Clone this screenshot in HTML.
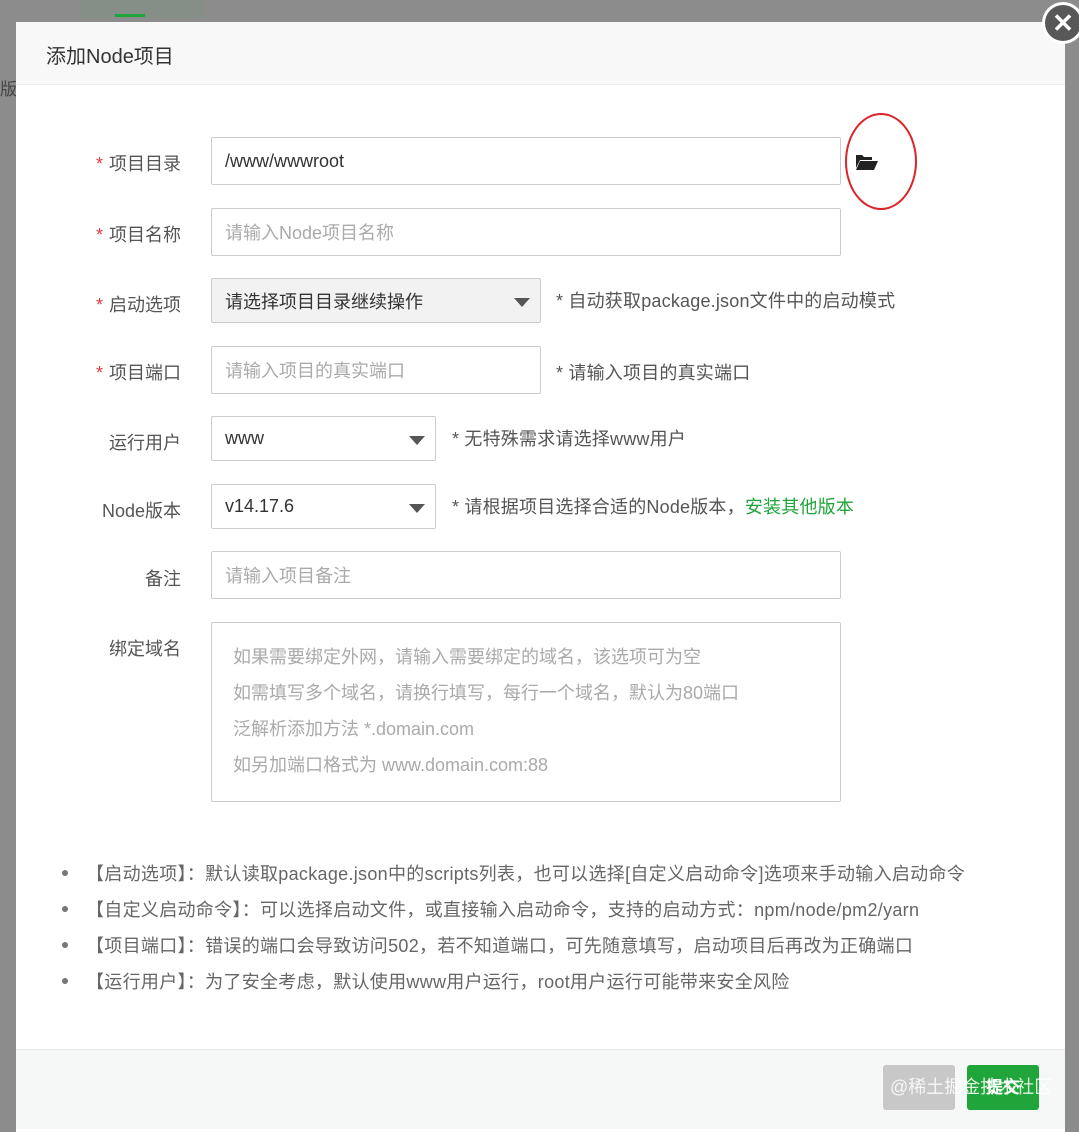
<!DOCTYPE html>
<html><head><meta charset="utf-8"><style>
*{margin:0;padding:0;box-sizing:border-box}
body{width:1079px;height:1124px;background:#8c8c8c;position:relative;overflow:hidden;font-family:"Liberation Sans","Noto Sans CJK SC",sans-serif;color:#555}
.a{position:absolute}
.modal{left:16px;top:22px;width:1049px;height:1110px;background:#fff}
.hdr{left:16px;top:22px;width:1049px;height:63px;background:#f8f8f8;border-bottom:1px solid #eee;font-size:20px;color:#333;padding:18px 0 0 30px}
.lbl{font-size:18px;color:#555;text-align:right;width:100px;left:81px}
.lbl b{color:#e4393c;font-weight:normal;margin-right:6px}
.in{border:1px solid #ccc;border-radius:2px;font-size:18px;color:#aaa;padding-left:13px;display:flex;align-items:center;background:#fff}
.tip{font-size:18px;color:#555;letter-spacing:0.2px}
.tri{position:absolute;right:10px;top:19px;width:0;height:0;border-left:8px solid transparent;border-right:8px solid transparent;border-top:9px solid #555}
ul{list-style:none}
li{font-size:18px;color:#666;height:36px;position:relative;padding-left:24px;letter-spacing:0.3px;white-space:nowrap}
li:before{content:"";position:absolute;left:0;top:10px;width:6px;height:6px;border-radius:50%;background:#777}
</style></head><body>
<div class="a" style="left:80px;top:0;width:125px;height:18px;background:#858f88"></div>
<div class="a" style="left:115px;top:14px;width:30px;height:3px;background:#20a53a"></div>
<div class="a" style="left:0;top:75px;width:16px;height:20px;font-size:17px;color:#444">版</div>
<div class="a modal"></div>
<div class="a hdr">添加Node项目</div>

<div class="a lbl" style="top:150px"><b>*</b>项目目录</div>
<div class="a in" style="left:211px;top:137px;width:630px;height:48px;color:#333">/www/wwwroot</div>
<svg class="a" style="left:855px;top:152px" width="24" height="20" viewBox="0 0 24 20"><path d="M1 3h6l2 2h8v3H5L1 16z" fill="#222"/><path d="M5 9h18l-4 9H1z" fill="#222"/></svg>
<div class="a" style="left:845px;top:113px;width:72px;height:97px;border:2px solid #d9242a;border-radius:50%"></div>

<div class="a lbl" style="top:221px"><b>*</b>项目名称</div>
<div class="a in" style="left:211px;top:208px;width:630px;height:48px">请输入Node项目名称</div>

<div class="a lbl" style="top:291px"><b>*</b>启动选项</div>
<div class="a in" style="left:211px;top:278px;width:330px;height:45px;background:#f2f2f2;color:#333">请选择项目目录继续操作<span class="tri"></span></div>
<div class="a tip" style="left:556px;top:287px">* 自动获取package.json文件中的启动模式</div>

<div class="a lbl" style="top:359px"><b>*</b>项目端口</div>
<div class="a in" style="left:211px;top:346px;width:330px;height:48px">请输入项目的真实端口</div>
<div class="a tip" style="left:556px;top:359px">* 请输入项目的真实端口</div>

<div class="a lbl" style="top:429px">运行用户</div>
<div class="a in" style="left:211px;top:416px;width:225px;height:45px;color:#333">www<span class="tri"></span></div>
<div class="a tip" style="left:452px;top:425px">* 无特殊需求请选择www用户</div>

<div class="a lbl" style="top:497px">Node版本</div>
<div class="a in" style="left:211px;top:484px;width:225px;height:45px;color:#333">v14.17.6<span class="tri"></span></div>
<div class="a tip" style="left:452px;top:493px">* 请根据项目选择合适的Node版本，<span style="color:#20a53a">安装其他版本</span></div>

<div class="a lbl" style="top:565px">备注</div>
<div class="a in" style="left:211px;top:551px;width:630px;height:48px">请输入项目备注</div>

<div class="a lbl" style="top:635px">绑定域名</div>
<div class="a in" style="left:211px;top:622px;width:630px;height:180px;display:block;padding:16px 0 0 21px;line-height:36px;color:#aaa">如果需要绑定外网，请输入需要绑定的域名，该选项可为空<br>如需填写多个域名，请换行填写，每行一个域名，默认为80端口<br>泛解析添加方法 *.domain.com<br>如另加端口格式为 www.domain.com:88</div>

<ul class="a" style="left:62px;top:860px">
<li>【启动选项】：默认读取package.json中的scripts列表，也可以选择[自定义启动命令]选项来手动输入启动命令</li>
<li>【自定义启动命令】：可以选择启动文件，或直接输入启动命令，支持的启动方式：npm/node/pm2/yarn</li>
<li>【项目端口】：错误的端口会导致访问502，若不知道端口，可先随意填写，启动项目后再改为正确端口</li>
<li>【运行用户】：为了安全考虑，默认使用www用户运行，root用户运行可能带来安全风险</li>
</ul>

<div class="a" style="left:16px;top:1049px;width:1049px;height:80px;background:#f6f7f7;border-top:1px solid #e8e8e8"></div>
<div class="a" style="left:883px;top:1065px;width:72px;height:45px;background:#c8c8c8;border-radius:3px"></div>
<div class="a" style="left:967px;top:1065px;width:72px;height:45px;background:#20a53a;border-radius:3px;color:#fff;font-size:17px;font-weight:bold;text-align:center;line-height:45px">提交</div>
<div class="a" style="left:890px;top:1073px;font-size:18px;color:rgba(255,255,255,.85);white-space:nowrap">@稀土掘金技术社区</div>
<div class="a" style="left:1065px;top:0;width:14px;height:1124px;background:#8c8c8c"></div>
<div class="a" style="left:1042px;top:2px;width:42px;height:42px;border-radius:50%;background:#fff"></div>
<div class="a" style="left:1045px;top:5px;width:36px;height:36px;border-radius:50%;background:#585858;color:#fff;font-size:26px;font-weight:bold;text-align:center;line-height:36px">✕</div>
</body></html>
